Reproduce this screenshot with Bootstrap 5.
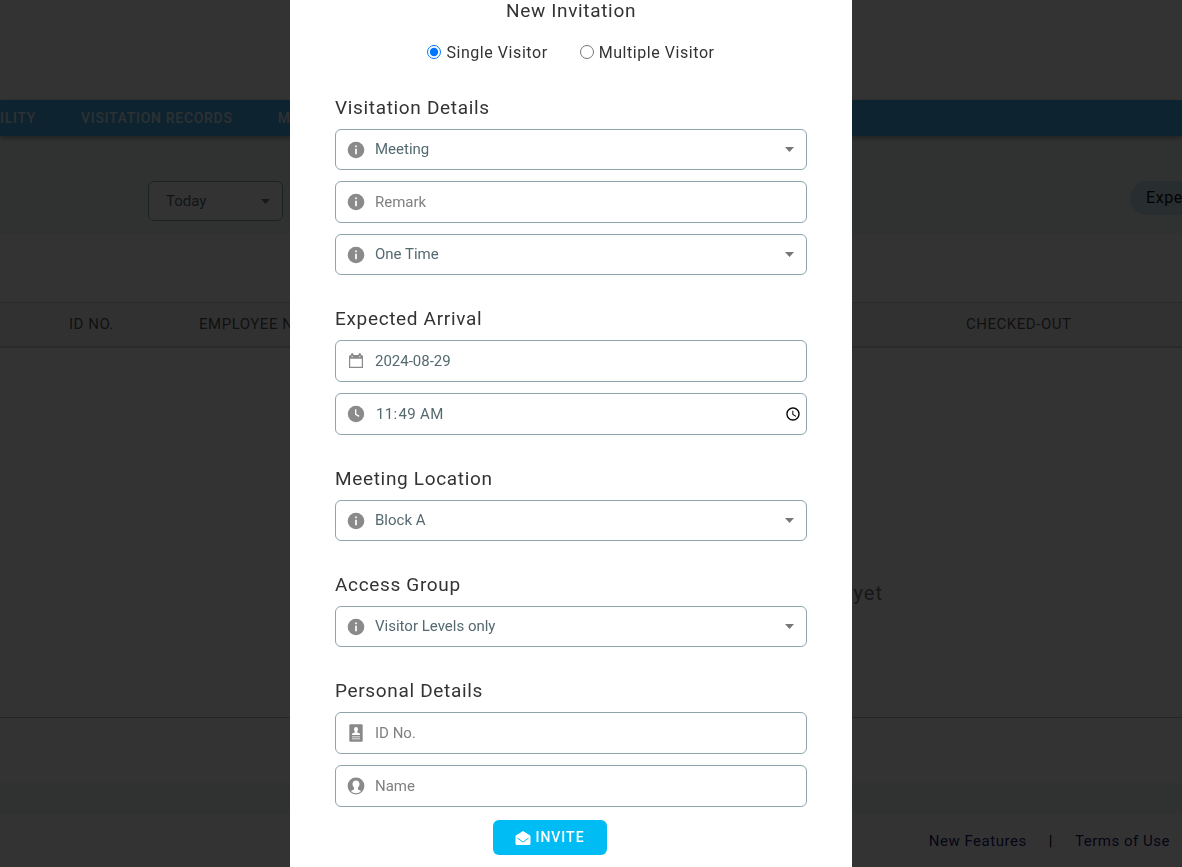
<!DOCTYPE html>
<html lang="en">
<head>
<meta charset="utf-8">
<meta name="viewport" content="width=device-width, initial-scale=1">
<title>New Invitation</title>
<link href="https://cdn.jsdelivr.net/npm/bootstrap@5.3.0/dist/css/bootstrap.min.css" rel="stylesheet">
<style>
  body { font-family: Roboto, "Liberation Sans", sans-serif; color: #333; background: #fff; overflow: hidden; }
  .page-top { height: 100px; }
  .main-nav { background: #42aeef; height: 36px; box-shadow: 0 2px 5px rgba(0,0,0,.35); position: relative; font-size: 14px; font-weight: 500; letter-spacing: .05em; gap: 45px; white-space: nowrap; }
  .main-nav a { color: #fff; opacity: .85; text-decoration: none; }
  .tinted { background: #f0f9f6; }
  .filters { height: 98px; padding: 45px 0 0 148px; }
  .day-select { appearance: none; width: 135px; height: 40px; border: 1px solid #90a4ae; border-radius: 6px; padding: 0 17px; font-size: 15px; color: #546a70; background-color: #fff; background-position: right 12px center; }
  .caret-select { background-image: url("data:image/svg+xml,%3Csvg xmlns='http://www.w3.org/2000/svg' viewBox='0 0 9 5'%3E%3Cpath d='M0 0h9L4.500 5z' fill='%23777'/%3E%3C/svg%3E"); background-size: 9px 5px; background-repeat: no-repeat; }
  .status-pill { width: 52px; height: 34px; padding-left: 16px; border-radius: 17px 0 0 17px; background: #c8def0; color: #111; font-size: 16px; letter-spacing: .035em; }
  .records { margin-top: 68px; font-size: 15px; table-layout: fixed; }
  .records th { height: 44px; padding: 0; font-weight: 400; color: #555; letter-spacing: .035em; background: #f2f2f2; border-top: 1px solid #cfcfcf; border-bottom: 2px solid #cfcfcf; vertical-align: middle; white-space: nowrap; line-height: 20px; }
  .records td { height: 371px; padding: 122px 299px 0 0; border-bottom: 1px solid #bbb; text-align: right; vertical-align: middle; font-size: 20px; letter-spacing: .05em; color: #777; }
  .page-gap { height: 65px; }
  .page-band { height: 31px; }
  .site-footer { padding: 16px 12px; font-size: 15px; letter-spacing: .035em; color: #000; gap: 22px; }
  .site-footer a { color: #20206c; text-decoration: none; }
  .shade { background: rgba(0,0,0,.8); padding-right: 40px; }
  .invite-dialog { max-width: 562px; min-height: 100%; margin: 0 auto; background: #fff; padding: 0 45px 12px; }
  .title-text, .section-title { font-size: 19px; line-height: 24px; font-weight: 400; letter-spacing: .035em; color: #333; margin: 0; }
  .title-text { line-height: 22px; }
  .visit-type { margin: 19px 0 31px; font-size: 16px; line-height: 24px; letter-spacing: .035em; gap: 32px; }
  .visit-type input { width: 14px; height: 14px; margin: 0 5px 4px 0; vertical-align: middle; }
  .section-title { margin-bottom: 9px; }
  .form-part { margin-bottom: 32px; }
  .form-part.last { margin-bottom: 13px; }
  .field-stack { display: flex; flex-direction: column; gap: 11px; }
  .field-box { border: 1px solid #90a4ae; border-radius: 6px; height: 42px; padding-left: 11px; }
  .field-box.pick { height: 41px; }
  .field-box svg { width: 18px; height: 18px; flex: none; fill: #8a8a8a; }
  .field-box input, .field-box select { border: 0; outline: 0; flex: 1; min-width: 0; height: 100%; font-size: 15px; color: #546a70; background-color: transparent; padding: 0 0 0 10px; appearance: none; }
  .field-box input::placeholder { color: #808080; }
  .field-box input[type=time] { padding: 0 2px 0 11px; letter-spacing: .02em; }
  .field-box select { background-position: right 12px center; }
  .send-row { padding-right: 42px; }
  .send { background: #00bcf5; color: #fff; border: 0; border-radius: 6px; width: 114px; height: 35px; font-size: 14px; font-weight: 500; letter-spacing: 1px; gap: 4px; }
  .send svg { width: 16px; height: 16px; }
</style>
</head>
<body>
<svg class="d-none">
  <symbol id="i-info" viewBox="0 0 18 18"><circle cx="9" cy="9" r="8.300"/><circle cx="9" cy="5.300" r="1.100" fill="#eee"/><path d="M8 7.800h2v5.400H8z" fill="#eee"/></symbol>
</svg>

<div class="page-top"></div>
<nav class="main-nav d-flex align-items-center" aria-label="Main">
  <a href="#">ILITY</a><a href="#">VISITATION RECORDS</a><a href="#">M</a>
</nav>
<main>
  <div class="filters tinted d-flex justify-content-between align-items-start">
    <select class="day-select caret-select" aria-label="Period"><option>Today</option></select>
    <span class="status-pill d-flex align-items-center">Expe</span>
  </div>
  <table class="records w-100">
    <colgroup><col style="width:69px"><col style="width:130px"><col><col style="width:216px"></colgroup>
    <thead><tr><th></th><th>ID NO.</th><th>EMPLOYEE NAME</th><th>CHECKED-OUT</th></tr></thead>
    <tbody><tr><td colspan="4">yet</td></tr></tbody>
  </table>
  <div class="page-gap"></div>
  <div class="page-band tinted"></div>
</main>
<footer class="site-footer d-flex justify-content-end"><a href="#">New Features</a><span>|</span><a href="#">Terms of Use</a></footer>

<div class="modal show d-block shade" role="dialog" aria-modal="true" aria-labelledby="dlg-title">
  <form class="invite-dialog">
    <h1 class="title-text text-center" id="dlg-title">New Invitation</h1>
    <div class="visit-type d-flex justify-content-center">
      <label><input type="radio" name="kind" checked>Single Visitor</label>
      <label><input type="radio" name="kind">Multiple Visitor</label>
    </div>

    <section class="form-part">
      <h2 class="section-title">Visitation Details</h2>
      <div class="field-stack">
        <div class="field-box pick d-flex align-items-center"><svg><use href="#i-info"/></svg><select class="caret-select" aria-label="Purpose"><option>Meeting</option></select></div>
        <div class="field-box d-flex align-items-center"><svg><use href="#i-info"/></svg><input type="text" placeholder="Remark" aria-label="Remark"></div>
        <div class="field-box pick d-flex align-items-center"><svg><use href="#i-info"/></svg><select class="caret-select" aria-label="Frequency"><option>One Time</option></select></div>
      </div>
    </section>

    <section class="form-part">
      <h2 class="section-title">Expected Arrival</h2>
      <div class="field-stack">
        <div class="field-box d-flex align-items-center"><svg viewBox="0 0 18 18"><path fill-rule="evenodd" d="M2 4.500q0-1.500 1.500-1.500H4V2.500q0-1.500 1.200-1.500T6.500 2.500V3h5v-.5Q11.500 1 12.800 1T14 2.500V3h.5Q16 3 16 4.500V16H2zM3.200 6.800v8h11.600v-8z"/><path d="M4.500 4.300q.8 1 1.500 0M12 4.300q.8 1 1.500 0" stroke="#fff" stroke-width=".8" fill="none"/></svg><input type="text" value="2024-08-29" aria-label="Arrival date"></div>
        <div class="field-box d-flex align-items-center"><svg viewBox="0 0 18 18"><circle cx="9" cy="9" r="8.200"/><path d="M8.700 4.200v5.200l3.500 2" stroke="#fff" stroke-width="1.300" fill="none"/></svg><input type="time" value="11:49" aria-label="Arrival time"></div>
      </div>
    </section>

    <section class="form-part">
      <h2 class="section-title">Meeting Location</h2>
      <div class="field-box pick d-flex align-items-center"><svg><use href="#i-info"/></svg><select class="caret-select" aria-label="Location"><option>Block A</option></select></div>
    </section>

    <section class="form-part">
      <h2 class="section-title">Access Group</h2>
      <div class="field-box pick d-flex align-items-center"><svg><use href="#i-info"/></svg><select class="caret-select" aria-label="Access group"><option>Visitor Levels only</option></select></div>
    </section>

    <section class="form-part last">
      <h2 class="section-title">Personal Details</h2>
      <div class="field-stack">
        <div class="field-box d-flex align-items-center"><svg viewBox="0 0 18 18"><rect x="2.300" y=".3" width="13.400" height="17.400" rx="1.200"/><path fill="#fff" d="M9 3a2 2.200 0 0 1 2 2.200c0 1.200-.6 1.700-.8 2.500l.2.900 2.100.7q.5.300.5 1.700H5q0-1.400.5-1.700l2.100-.7.2-.9C7.600 6.900 7 6.400 7 5.200A2 2.200 0 0 1 9 3zM5 12.400h8v.8H5zM5 14.400h8v.8H5z"/></svg><input type="text" placeholder="ID No." aria-label="ID No."></div>
        <div class="field-box d-flex align-items-center"><svg viewBox="0 0 18 18"><circle cx="9" cy="9" r="8.400"/><path fill="#fff" d="M9 3.400c2.200 0 3.500 1.500 3.500 3.600 0 1.600-.7 2.500-1.500 3.600v1.800l3.200 1.500A7.300 7.300 0 0 1 9 16.300a7.300 7.300 0 0 1-5.200-2.400L7 12.400v-1.800C6.200 9.500 5.500 8.600 5.500 7c0-2.100 1.300-3.600 3.500-3.600z"/></svg><input type="text" placeholder="Name" aria-label="Name"></div>
      </div>
    </section>

    <div class="send-row d-flex justify-content-center">
      <button type="button" class="send d-flex align-items-center justify-content-center"><svg viewBox="0 0 16 16"><path fill="#fff" d="M8 1l6.800 4.200q.7.400.7 1.300v7q0 1.500-1.500 1.500H2Q.5 15 .5 13.500v-7q0-.9.700-1.300z"/><path d="M2.500 8l4.600 3.500q.9.600 1.800 0L13.500 8" stroke="#00bcf5" stroke-width="1" fill="none"/></svg>INVITE</button>
    </div>
  </form>
</div>
<script src="https://cdn.jsdelivr.net/npm/bootstrap@5.3.0/dist/js/bootstrap.bundle.min.js"></script>
</body>
</html>
